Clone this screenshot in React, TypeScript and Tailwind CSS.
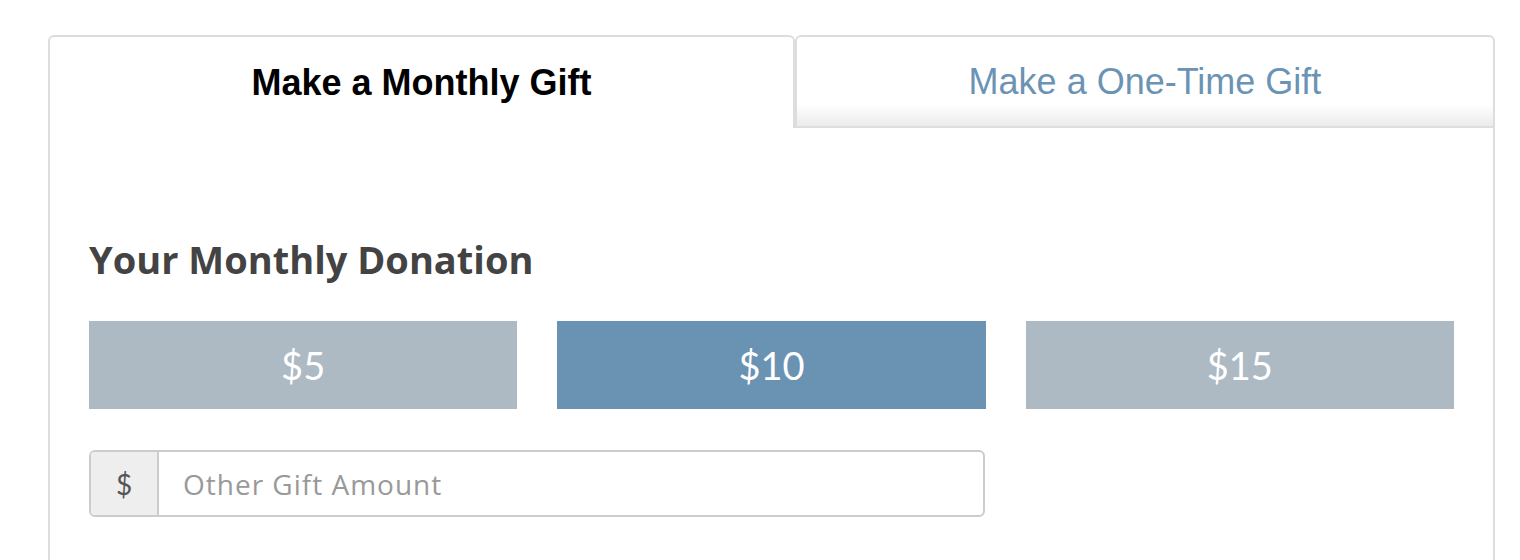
import React from 'react'

const amounts = ['$5', '$10', '$15']

export default function App() {
  const [selected, setSelected] = React.useState('$10')

  return (
    <div className="min-h-[560px] bg-white pl-[48px] pr-[25px] pt-[35px]">
      <div className="flex">
        <div className="flex h-[93px] w-[747px] items-center justify-center rounded-t-[6px] border-2 border-b-0 border-[#dddddd] bg-white font-['Liberation_Sans',Arial,sans-serif] text-[36px] font-bold text-black">
          Make a Monthly Gift
        </div>
        <div className="flex h-[93px] flex-1 items-center justify-center rounded-t-[6px] border-2 border-[#dddddd] bg-gradient-to-b from-white from-75% to-[#ebebeb] font-['Liberation_Sans',Arial,sans-serif] text-[36px] text-[#6b93b3]">
          Make a One-Time Gift
        </div>
      </div>

      <div className="h-[432px] border-x-2 border-[#dddddd] px-[39px] pt-[107px]">
        <h2 className="font-['Open_Sans',sans-serif] text-[38px] font-bold leading-[48px] text-[#434343]">
          Your Monthly Donation
        </h2>

        <div className="mt-[38px] grid grid-cols-3 gap-[40px]">
          {amounts.map((a) => (
            <button
              key={a}
              onClick={() => setSelected(a)}
              className={`flex h-[88px] items-center justify-center font-['Lato',sans-serif] text-[38px] text-white ${
                a === selected ? 'bg-[#6a93b3]' : 'bg-[#adb9c3]'
              }`}
            >
              {a}
            </button>
          ))}
        </div>

        <div className="mt-[41px] flex h-[67px] w-[896px] overflow-hidden rounded-[6px] border-2 border-[#cccccc]">
          <span className="flex w-[68px] items-center justify-center border-r-2 border-[#cccccc] bg-[#eeeeee] font-['Lato',sans-serif] text-[28px] text-[#555555]">
            $
          </span>
          <input
            placeholder="Other Gift Amount"
            className="flex-1 px-[24px] font-['Open_Sans',sans-serif] text-[28px] tracking-[1px] text-[#555555] outline-none placeholder:text-[#999999]"
          />
        </div>
      </div>
    </div>
  )
}
